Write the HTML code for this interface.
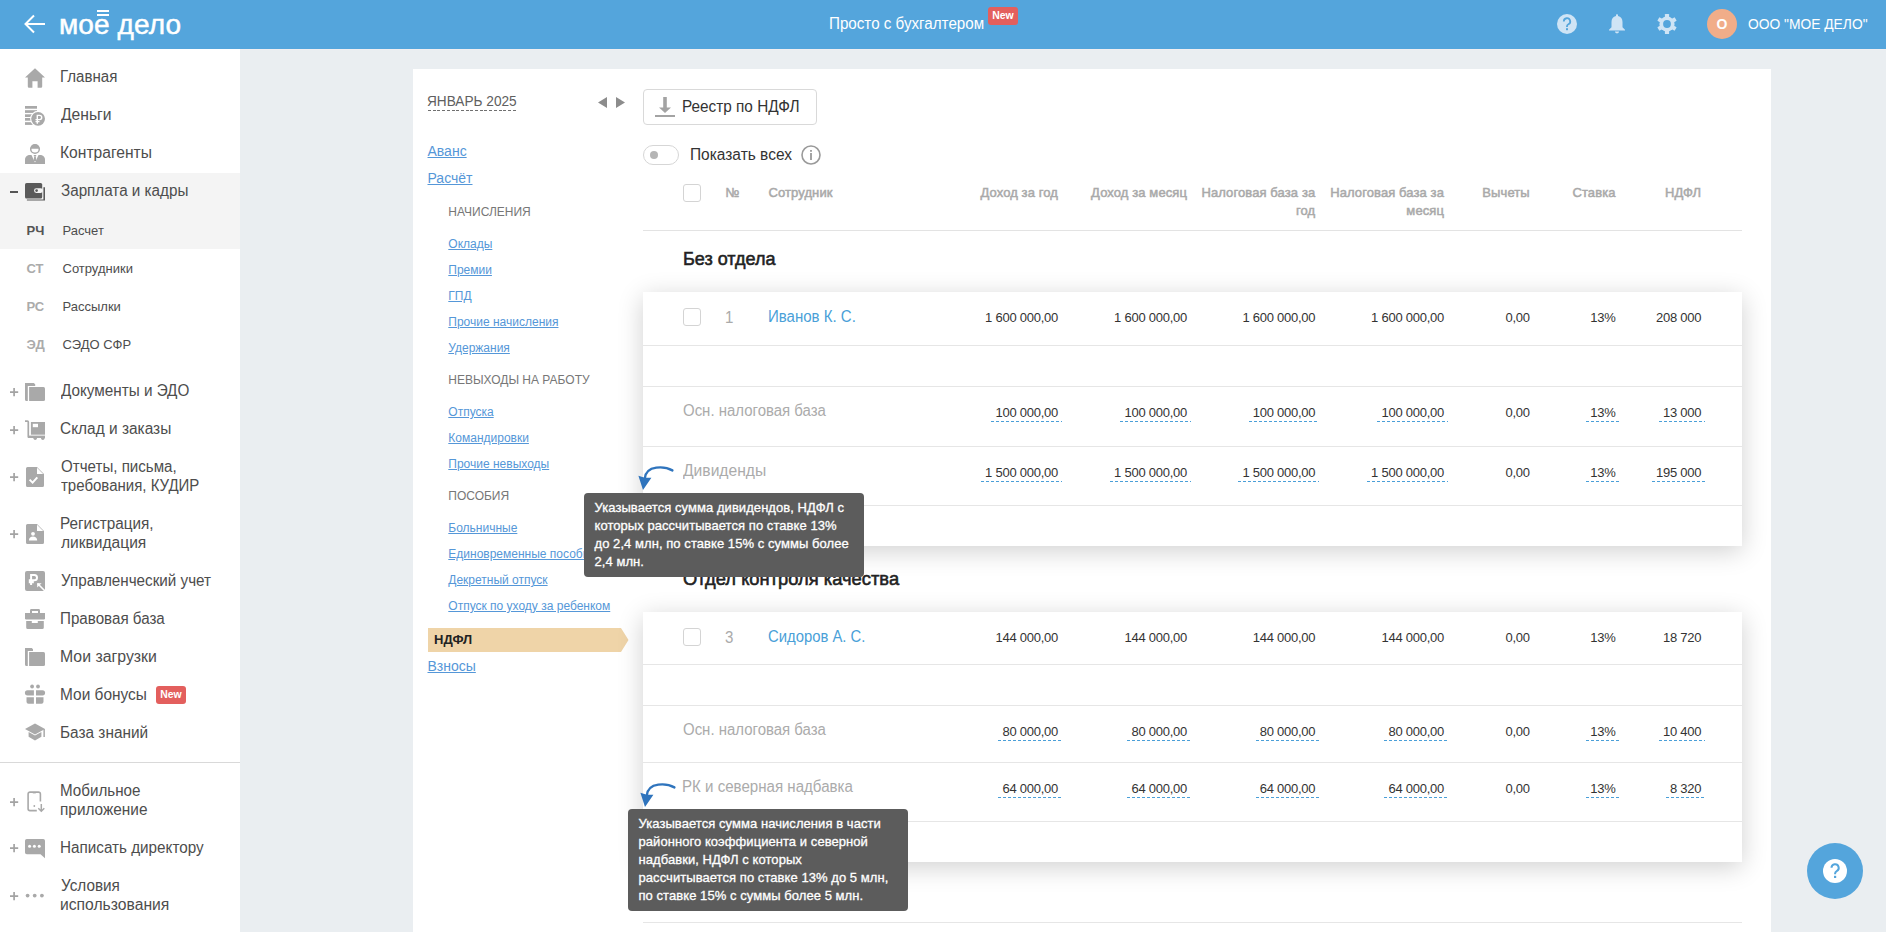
<!DOCTYPE html><html><head><meta charset="utf-8"><style>
html,body{margin:0;padding:0;}
body{width:1886px;height:932px;overflow:hidden;position:relative;background:#eaeef1;font-family:"Liberation Sans",sans-serif;}
.t{position:absolute;white-space:pre;}
svg{position:absolute;overflow:visible;}
.lnk{text-decoration:underline;text-underline-offset:1px;}
.dl{display:inline-block;height:16px;padding:0 4px;vertical-align:top;background:repeating-linear-gradient(90deg,#4a9fd8 0 3px,transparent 3px 5px) left bottom/100% 1px no-repeat;}
</style></head><body>
<div style="position:absolute;left:0px;top:0px;width:1886px;height:49px;background:#54a5dc;"></div>
<svg style="left:24px;top:14px" width="22" height="20" viewBox="0 0 22 20"><path d="M21 10H2M10 1.5L1.5 10L10 18.5" fill="none" stroke="#fff" stroke-width="2"/></svg>
<div class="t" style="left:59px;top:10.8px;font-size:28px;line-height:28px;color:#fff;letter-spacing:0.1px;-webkit-text-stroke:0.5px #fff">мое дело</div>
<div style="position:absolute;left:97px;top:10px;width:12px;height:2.2px;background:#fff;"></div>
<div style="position:absolute;left:97px;top:14px;width:12px;height:2.2px;background:#fff;"></div>
<div class="t " style="top:16px;font-size:16px;line-height:16px;color:#fff;left:828.55px;transform:scaleX(0.9481);transform-origin:0 0;">Просто с бухгалтером</div>
<div style="position:absolute;left:988px;top:7px;width:30px;height:18px;background:#e35f5d;border-radius:3px;"></div>
<div class="t " style="top:10px;font-size:11px;line-height:11px;color:#fff;font-weight:700;left:703.00px;width:600px;text-align:center;transform:scaleX(0.95);transform-origin:50% 0;">New</div>
<svg style="left:1557px;top:14px" width="20" height="20" viewBox="0 0 20 20"><circle cx="10" cy="10" r="10" fill="#cfe4f5"/><path d="M6.8 7.4a3.2 3.2 0 1 1 4.6 2.9c-1 .5-1.4 1-1.4 2v.6" fill="none" stroke="#54a5dc" stroke-width="1.8"/><rect x="9" y="14.2" width="2" height="2" fill="#54a5dc"/></svg>
<svg style="left:1609px;top:14px" width="16" height="20" viewBox="0 0 16 20"><path d="M8 0.3c.6 0 1 .4 1 1v.8c2.9.5 4.5 3 4.5 6v5.2L16 15.8v.6H0v-.6l2.5-2.5V8.1c0-3 1.6-5.5 4.5-6v-.8c0-.6.4-1 1-1z M5.9 17.6h4.2a2.1 1.8 0 0 1-4.2 0z" fill="#cfe4f5"/></svg>
<svg style="left:1657px;top:14px" width="20" height="20" viewBox="0 0 20 20"><g fill="#cfe4f5"><circle cx="10" cy="10" r="7.6"/><rect x="7.9" y="0" width="4.2" height="20" rx="0.6"/><rect x="7.9" y="0" width="4.2" height="20" rx="0.6" transform="rotate(60 10 10)"/><rect x="7.9" y="0" width="4.2" height="20" rx="0.6" transform="rotate(120 10 10)"/></g><circle cx="10" cy="10" r="3.9" fill="#54a5dc"/></svg>
<div style="position:absolute;left:1707px;top:9px;width:30px;height:30px;background:#f1ad89;border-radius:50%;"></div>
<div class="t " style="top:17px;font-size:14px;line-height:14px;color:#fff;font-weight:700;left:1422.00px;width:600px;text-align:center;">О</div>
<div class="t " style="top:16px;font-size:15px;line-height:15px;color:#fff;left:1748.20px;transform:scaleX(0.9208);transform-origin:0 0;">ООО "МОЕ ДЕЛО"</div>
<div style="position:absolute;left:0px;top:49px;width:240px;height:1886px;background:#fff;"></div>
<div style="position:absolute;left:240px;top:49px;width:1886px;height:1px;background:#f1eff1;"></div>
<div style="position:absolute;left:0px;top:173px;width:240px;height:76px;background:#f4f4f4;"></div>
<div style="position:absolute;left:0px;top:762px;width:240px;height:1px;background:#d9d9d9;"></div>
<div class="t " style="top:69px;font-size:16px;line-height:16px;color:#4d4d4d;left:59.76px;transform:scaleX(0.9424);transform-origin:0 0;">Главная</div>
<svg style="left:25px;top:68px" width="20" height="20" viewBox="0 0 20 20"><path d="M10 0.3L20 9.6H17.2V18.6a1.2 1.2 0 0 1-1.2 1.2H12.6V13.2H7.4V19.8H4a1.2 1.2 0 0 1-1.2-1.2V9.6H0z" fill="#a9a9a9"/></svg>
<div class="t " style="top:107px;font-size:16px;line-height:16px;color:#4d4d4d;left:60.70px;transform:scaleX(0.9784);transform-origin:0 0;">Деньги</div>
<svg style="left:24px;top:105px" width="22" height="21" viewBox="0 0 22 21"><rect x="1" y="1" width="12" height="2.7" fill="#a9a9a9"/><rect x="1" y="5.2" width="12" height="2.7" fill="#a9a9a9"/><rect x="1" y="9.3" width="12" height="2.7" fill="#a9a9a9"/><rect x="1" y="13" width="12" height="2.7" fill="#a9a9a9"/><rect x="1" y="17.2" width="12" height="2.7" fill="#a9a9a9"/><circle cx="14.1" cy="13.8" r="8" fill="#fff"/><circle cx="14.1" cy="13.8" r="6.9" fill="#a9a9a9"/><path d="M13.3 18.7V10.4h2.3a2.1 2.1 0 0 1 0 4.2H11.5M11.5 16.6h4" fill="none" stroke="#fff" stroke-width="1.4"/></svg>
<div class="t " style="top:145px;font-size:16px;line-height:16px;color:#4d4d4d;left:59.72px;transform:scaleX(0.9753);transform-origin:0 0;">Контрагенты</div>
<svg style="left:25px;top:143px" width="20" height="21" viewBox="0 0 20 21"><circle cx="10" cy="6" r="4.3" fill="none" stroke="#a9a9a9" stroke-width="1.5"/><path d="M5.7 5.8a4.3 4.3 0 0 1 8.6 0z" fill="#a9a9a9"/><path d="M0 21V16.5C0 13.8 2.2 12 5 12H15C17.8 12 20 13.8 20 16.5V21z" fill="#a9a9a9"/><path d="M6.5 12L10 19.5L13.5 12z" fill="#fff"/><path d="M8.8 12H11.2V13.3H8.8z M9.2 13.6H10.8L11.4 18H8.6z" fill="#a9a9a9"/></svg>
<div class="t " style="top:183px;font-size:16px;line-height:16px;color:#4d4d4d;left:60.70px;transform:scaleX(0.9511);transform-origin:0 0;">Зарплата и кадры</div>
<svg style="left:25px;top:183px" width="20" height="18" viewBox="0 0 20 18"><rect x="0" y="0" width="17.2" height="15.6" rx="1.6" fill="#5a5a5a"/><path d="M18.4 4.3H20V17.6H1.9V16.4H18.4z" fill="#5a5a5a"/><rect x="9" y="5.3" width="9" height="4.6" rx="2.3" fill="#f4f4f4"/><circle cx="11.6" cy="7.6" r="1.35" fill="#5a5a5a"/></svg>
<div class="t " style="top:383px;font-size:16px;line-height:16px;color:#4d4d4d;left:60.70px;transform:scaleX(0.9537);transform-origin:0 0;">Документы и ЭДО</div>
<svg style="left:25px;top:383px" width="20" height="18" viewBox="0 0 20 18"><path d="M0 0H8.8L10.2 1.3V2.9H2.8V18H1.5A1.5 1.5 0 0 1 0 16.5z" fill="#a9a9a9"/><path d="M4.1 4.1H18.5A1.5 1.5 0 0 1 20 5.6V16.5A1.5 1.5 0 0 1 18.5 18H4.1z" fill="#a9a9a9"/></svg>
<div class="t " style="top:421px;font-size:16px;line-height:16px;color:#4d4d4d;left:59.74px;transform:scaleX(0.9649);transform-origin:0 0;">Склад и заказы</div>
<svg style="left:25px;top:420px" width="20" height="21" viewBox="0 0 20 21"><path d="M0 1.2H2.4a0.9 0.9 0 0 1 0.9 0.9V16.6H20" fill="none" stroke="#a9a9a9" stroke-width="1.7"/><rect x="5.9" y="2" width="14.1" height="12.7" fill="#a9a9a9"/><rect x="7.8" y="3.8" width="5.2" height="3.4" fill="#fff"/><rect x="3" y="15.8" width="17" height="2.2" fill="#a9a9a9"/><circle cx="10.2" cy="18.3" r="1.7" fill="#a9a9a9"/><circle cx="17.8" cy="18.3" r="1.7" fill="#a9a9a9"/></svg>
<div class="t " style="top:459px;font-size:16px;line-height:16px;color:#4d4d4d;left:60.70px;transform:scaleX(0.9446);transform-origin:0 0;">Отчеты, письма,</div>
<div class="t " style="top:478px;font-size:16px;line-height:16px;color:#4d4d4d;left:60.70px;transform:scaleX(0.9381);transform-origin:0 0;">требования, КУДИР</div>
<svg style="left:26px;top:467px" width="18" height="20" viewBox="0 0 18 20"><path d="M1.5 0H11L18 7V18.5a1.5 1.5 0 0 1-1.5 1.5H1.5A1.5 1.5 0 0 1 0 18.5V1.5A1.5 1.5 0 0 1 1.5 0z" fill="#a9a9a9"/><path d="M11 0.8V7H17.2z" fill="#fff"/><path d="M3.6 12.6L6.6 15.6L11.3 10.4" fill="none" stroke="#fff" stroke-width="2"/></svg>
<div class="t " style="top:516px;font-size:16px;line-height:16px;color:#4d4d4d;left:59.74px;transform:scaleX(0.9552);transform-origin:0 0;">Регистрация,</div>
<div class="t " style="top:535px;font-size:16px;line-height:16px;color:#4d4d4d;left:60.70px;transform:scaleX(0.9724);transform-origin:0 0;">ликвидация</div>
<svg style="left:26px;top:524px" width="18" height="20" viewBox="0 0 18 20"><path d="M1.5 0H11L18 7V18.5a1.5 1.5 0 0 1-1.5 1.5H1.5A1.5 1.5 0 0 1 0 18.5V1.5A1.5 1.5 0 0 1 1.5 0z" fill="#a9a9a9"/><path d="M11 0.8V7H17.2z" fill="#fff"/><circle cx="7" cy="9.8" r="1.9" fill="#fff"/><path d="M2.9 16.6C2.9 13.8 4.8 12.6 7 12.6S11.2 13.8 11.2 16.6z" fill="#fff"/></svg>
<div class="t " style="top:573px;font-size:16px;line-height:16px;color:#4d4d4d;left:60.70px;transform:scaleX(0.9513);transform-origin:0 0;">Управленческий учет</div>
<svg style="left:25px;top:571px" width="20" height="20" viewBox="0 0 20 20"><path d="M2 0H18a2 2 0 0 1 2 2V18.5L18.5 20H2a2 2 0 0 1-2-2V2a2 2 0 0 1 2-2z" fill="#a9a9a9"/><path d="M6.1 14V4.1H9.4a2.6 2.6 0 0 1 0 5.2H3.8M3.8 11.3H8.8" fill="none" stroke="#fff" stroke-width="2"/><path d="M12.5 12.5L20 20" fill="none" stroke="#fff" stroke-width="1.6"/><path d="M12.2 12.2H16.6L12.2 16.6z" fill="#fff"/></svg>
<div class="t " style="top:611px;font-size:16px;line-height:16px;color:#4d4d4d;left:59.75px;transform:scaleX(0.9473);transform-origin:0 0;">Правовая база</div>
<svg style="left:25px;top:609px" width="20" height="20" viewBox="0 0 20 20"><path d="M5 1.4A1.4 1.4 0 0 1 6.4 0H13.6A1.4 1.4 0 0 1 15 1.4V4H13V2H7V4H5z" fill="#a9a9a9"/><path d="M0 4H20V9.2A1.2 1.2 0 0 1 18.8 10.4H1.2A1.2 1.2 0 0 1 0 9.2z" fill="#a9a9a9"/><path d="M1.2 12H6.8V13.9H12.8V12H18.8V18.5A1.5 1.5 0 0 1 17.3 20H2.7A1.5 1.5 0 0 1 1.2 18.5z" fill="#a9a9a9"/></svg>
<div class="t " style="top:649px;font-size:16px;line-height:16px;color:#4d4d4d;left:59.71px;transform:scaleX(0.9896);transform-origin:0 0;">Мои загрузки</div>
<svg style="left:25px;top:648px" width="20" height="18" viewBox="0 0 20 18"><path d="M0 0H6.8L8 1.2V2.9H2.8V18H1.5A1.5 1.5 0 0 1 0 16.5z" fill="#a9a9a9"/><path d="M4.1 4.1H18.5A1.5 1.5 0 0 1 20 5.6V16.5A1.5 1.5 0 0 1 18.5 18H4.1z" fill="#a9a9a9"/></svg>
<div class="t " style="top:687px;font-size:16px;line-height:16px;color:#4d4d4d;left:59.73px;transform:scaleX(0.9659);transform-origin:0 0;">Мои бонусы</div>
<svg style="left:25px;top:684px" width="20" height="20" viewBox="0 0 20 20"><circle cx="7.1" cy="2.5" r="1.9" fill="#a9a9a9"/><circle cx="13" cy="2.5" r="1.9" fill="#a9a9a9"/><path d="M2.5 6.2H8.9V11.4H2.5a2.6 2.6 0 0 1 0-5.2z M11 6.2H17.5a2.6 2.6 0 0 1 0 5.2H11z" fill="#a9a9a9"/><path d="M1.5 13.2H8.9V19.8H3.5a2 2 0 0 1-2-2z M11 13.2H18.5V17.8a2 2 0 0 1-2 2H11z" fill="#a9a9a9"/></svg>
<div class="t " style="top:725px;font-size:16px;line-height:16px;color:#4d4d4d;left:59.74px;transform:scaleX(0.9611);transform-origin:0 0;">База знаний</div>
<svg style="left:25px;top:723px" width="20" height="18" viewBox="0 0 20 18"><path d="M10 0.5L20 6L10 11.6L0 6z" fill="#a9a9a9"/><path d="M3.6 9V13.8L10 17.5L16.4 13.8V9L10 12.6z" fill="#a9a9a9"/><rect x="18.4" y="6" width="1.5" height="8" fill="#a9a9a9"/></svg>
<div class="t " style="top:783px;font-size:16px;line-height:16px;color:#4d4d4d;left:59.75px;transform:scaleX(0.9488);transform-origin:0 0;">Мобильное</div>
<div class="t " style="top:802px;font-size:16px;line-height:16px;color:#4d4d4d;left:59.74px;transform:scaleX(0.9611);transform-origin:0 0;">приложение</div>
<svg style="left:27px;top:791px" width="19" height="22" viewBox="0 0 19 22"><path d="M9.8 19.6H3A1.9 1.9 0 0 1 1.1 17.7V3A1.9 1.9 0 0 1 3 1.1H11.5A1.9 1.9 0 0 1 13.4 3V10.5" fill="none" stroke="#a9a9a9" stroke-width="1.6"/><rect x="5.8" y="1" width="3" height="1.4" fill="#a9a9a9"/><circle cx="7.3" cy="15" r="0.9" fill="#a9a9a9"/><path d="M14.3 13V20.2M11.3 17.2L14.3 20.2L17.3 17.2" fill="none" stroke="#a9a9a9" stroke-width="1.5"/></svg>
<div class="t " style="top:840px;font-size:16px;line-height:16px;color:#4d4d4d;left:59.75px;transform:scaleX(0.9527);transform-origin:0 0;">Написать директору</div>
<svg style="left:25px;top:839px" width="20" height="20" viewBox="0 0 20 20"><path d="M1.8 0H18.2A1.8 1.8 0 0 1 20 1.8V19.2L15.5 15.3H1.8A1.8 1.8 0 0 1 0 13.5V1.8A1.8 1.8 0 0 1 1.8 0z" fill="#a9a9a9"/><circle cx="4.6" cy="7.2" r="1.5" fill="#fff"/><circle cx="9.4" cy="7.2" r="1.5" fill="#fff"/><circle cx="14.2" cy="7.2" r="1.5" fill="#fff"/></svg>
<div class="t " style="top:878px;font-size:16px;line-height:16px;color:#4d4d4d;left:60.70px;transform:scaleX(0.9557);transform-origin:0 0;">Условия</div>
<div class="t " style="top:897px;font-size:16px;line-height:16px;color:#4d4d4d;left:59.72px;transform:scaleX(0.9800);transform-origin:0 0;">использования</div>
<svg style="left:25px;top:893px" width="20" height="5" viewBox="0 0 20 5"><circle cx="2.6" cy="2.6" r="1.9" fill="#a9a9a9"/><circle cx="9.7" cy="2.6" r="1.9" fill="#a9a9a9"/><circle cx="16.9" cy="2.6" r="1.9" fill="#a9a9a9"/></svg>
<svg style="left:9.9px;top:387.8px" width="8.2" height="8.2" viewBox="0 0 8.2 8.2"><path d="M0 4.1h8.2M4.1 0v8.2" stroke="#a3a3a3" stroke-width="1.7"/></svg>
<svg style="left:9.9px;top:425.8px" width="8.2" height="8.2" viewBox="0 0 8.2 8.2"><path d="M0 4.1h8.2M4.1 0v8.2" stroke="#a3a3a3" stroke-width="1.7"/></svg>
<svg style="left:9.9px;top:472.9px" width="8.2" height="8.2" viewBox="0 0 8.2 8.2"><path d="M0 4.1h8.2M4.1 0v8.2" stroke="#a3a3a3" stroke-width="1.7"/></svg>
<svg style="left:9.9px;top:529.9px" width="8.2" height="8.2" viewBox="0 0 8.2 8.2"><path d="M0 4.1h8.2M4.1 0v8.2" stroke="#a3a3a3" stroke-width="1.7"/></svg>
<svg style="left:9.9px;top:797.6px" width="8.2" height="8.2" viewBox="0 0 8.2 8.2"><path d="M0 4.1h8.2M4.1 0v8.2" stroke="#a3a3a3" stroke-width="1.7"/></svg>
<svg style="left:9.9px;top:844.3px" width="8.2" height="8.2" viewBox="0 0 8.2 8.2"><path d="M0 4.1h8.2M4.1 0v8.2" stroke="#a3a3a3" stroke-width="1.7"/></svg>
<svg style="left:9.9px;top:891.6px" width="8.2" height="8.2" viewBox="0 0 8.2 8.2"><path d="M0 4.1h8.2M4.1 0v8.2" stroke="#a3a3a3" stroke-width="1.7"/></svg>
<div style="position:absolute;left:9.9px;top:191px;width:8.2px;height:2px;background:#555;"></div>
<div class="t " style="top:224px;font-size:13px;line-height:13px;color:#555;font-weight:700;left:26.50px;">РЧ</div>
<div class="t " style="top:224px;font-size:13px;line-height:13px;color:#4d4d4d;left:62.50px;">Расчет</div>
<div class="t " style="top:262px;font-size:13px;line-height:13px;color:#ababab;font-weight:700;left:26.50px;">СТ</div>
<div class="t " style="top:262px;font-size:13px;line-height:13px;color:#4d4d4d;left:62.50px;">Сотрудники</div>
<div class="t " style="top:300px;font-size:13px;line-height:13px;color:#ababab;font-weight:700;left:26.50px;">РС</div>
<div class="t " style="top:300px;font-size:13px;line-height:13px;color:#4d4d4d;left:62.50px;">Рассылки</div>
<div class="t " style="top:338px;font-size:13px;line-height:13px;color:#ababab;font-weight:700;left:26.50px;">ЭД</div>
<div class="t " style="top:338px;font-size:13px;line-height:13px;color:#4d4d4d;left:62.50px;">СЭДО СФР</div>
<div style="position:absolute;left:156px;top:686px;width:30px;height:18px;background:#e35f5d;border-radius:3px;"></div>
<div class="t " style="top:689px;font-size:11px;line-height:11px;color:#fff;font-weight:700;left:-129.00px;width:600px;text-align:center;transform:scaleX(0.95);transform-origin:50% 0;">New</div>
<div style="position:absolute;left:413px;top:69px;width:1358px;height:900px;background:#fff;"></div>
<div class="t " style="top:94px;font-size:14px;line-height:14px;color:#606060;left:426.93px;transform:scaleX(0.9747);transform-origin:0 0;">ЯНВАРЬ 2025</div>
<div style="position:absolute;left:428px;top:110px;width:89px;height:1px;background:repeating-linear-gradient(90deg,#707070 0 3px,transparent 3px 4.7px);"></div>
<svg style="left:598px;top:97px" width="28" height="11" viewBox="0 0 28 11"><path d="M9 0v11L0 5.5z M18 0v11l9-5.5z" fill="#8c8c8c"/></svg>
<div class="t lnk" style="top:144px;font-size:14px;line-height:14px;color:#5597d8;left:427.50px;">Аванс</div>
<div class="t lnk" style="top:171px;font-size:14px;line-height:14px;color:#5597d8;left:427.50px;">Расчёт</div>
<div class="t " style="top:206px;font-size:12px;line-height:12px;color:#777;left:448.30px;">НАЧИСЛЕНИЯ</div>
<div class="t lnk" style="top:238px;font-size:12px;line-height:12px;color:#5597d8;left:448.30px;">Оклады</div>
<div class="t lnk" style="top:264px;font-size:12px;line-height:12px;color:#5597d8;left:448.30px;">Премии</div>
<div class="t lnk" style="top:290px;font-size:12px;line-height:12px;color:#5597d8;left:448.30px;">ГПД</div>
<div class="t lnk" style="top:316px;font-size:12px;line-height:12px;color:#5597d8;left:448.30px;">Прочие начисления</div>
<div class="t lnk" style="top:342px;font-size:12px;line-height:12px;color:#5597d8;left:448.30px;">Удержания</div>
<div class="t " style="top:374px;font-size:12px;line-height:12px;color:#777;left:448.30px;">НЕВЫХОДЫ НА РАБОТУ</div>
<div class="t lnk" style="top:406px;font-size:12px;line-height:12px;color:#5597d8;left:448.30px;">Отпуска</div>
<div class="t lnk" style="top:432px;font-size:12px;line-height:12px;color:#5597d8;left:448.30px;">Командировки</div>
<div class="t lnk" style="top:458px;font-size:12px;line-height:12px;color:#5597d8;left:448.30px;">Прочие невыходы</div>
<div class="t " style="top:490px;font-size:12px;line-height:12px;color:#777;left:448.30px;">ПОСОБИЯ</div>
<div class="t lnk" style="top:522px;font-size:12px;line-height:12px;color:#5597d8;left:448.30px;">Больничные</div>
<div class="t lnk" style="top:548px;font-size:12px;line-height:12px;color:#5597d8;left:448.30px;">Единовременные пособия</div>
<div class="t lnk" style="top:574px;font-size:12px;line-height:12px;color:#5597d8;left:448.30px;">Декретный отпуск</div>
<div class="t lnk" style="top:600px;font-size:12px;line-height:12px;color:#5597d8;left:448.30px;">Отпуск по уходу за ребенком</div>
<svg style="left:428px;top:628px" width="201" height="24" viewBox="0 0 201 24"><path d="M0 0H193L200.5 12L193 24H0z" fill="#efd4a8"/></svg>
<div class="t " style="top:633px;font-size:13px;line-height:13px;color:#222;font-weight:700;left:434.00px;">НДФЛ</div>
<div class="t lnk" style="top:659px;font-size:14px;line-height:14px;color:#5597d8;left:427.50px;">Взносы</div>
<div style="position:absolute;left:643px;top:89px;width:172px;height:34px;border:1px solid #d9d9d9;border-radius:4px;background:#fff;"></div>
<svg style="left:655px;top:97px" width="20" height="20" viewBox="0 0 20 20"><rect x="8.2" y="0" width="3.6" height="11" fill="#a3a3a3"/><path d="M4 10.4H16L10 16z" fill="#a3a3a3"/><rect x="0" y="18" width="20" height="2" fill="#a3a3a3"/></svg>
<div class="t " style="top:99px;font-size:16px;line-height:16px;color:#333;left:682.14px;transform:scaleX(0.9579);transform-origin:0 0;">Реестр по НДФЛ</div>
<div style="position:absolute;left:643px;top:145px;width:34px;height:18px;border:1px solid #d6d6d6;border-radius:10px;"></div>
<div style="position:absolute;left:650px;top:151px;width:8px;height:8px;background:#b5b5b5;border-radius:50%;"></div>
<div class="t " style="top:147px;font-size:16px;line-height:16px;color:#333;left:690.33px;transform:scaleX(0.9673);transform-origin:0 0;">Показать всех</div>
<svg style="left:801px;top:145px" width="20" height="20" viewBox="0 0 20 20"><circle cx="10" cy="10" r="9" fill="none" stroke="#9a9a9a" stroke-width="1.6"/><rect x="9.1" y="8" width="1.8" height="7" fill="#9a9a9a"/><rect x="9.1" y="5" width="1.8" height="1.8" fill="#9a9a9a"/></svg>
<div style="position:absolute;left:683px;top:184px;width:16px;height:16px;border:1px solid #d4d4d4;border-radius:3px;background:#fff;"></div>
<div class="t " style="top:186px;font-size:13px;line-height:13px;color:#a9a9a9;left:725.50px;-webkit-text-stroke:0.5px #a9a9a9;">№</div>
<div class="t " style="top:186px;font-size:13px;line-height:13px;color:#a9a9a9;letter-spacing:0.1px;left:768.50px;-webkit-text-stroke:0.5px #a9a9a9;">Сотрудник</div>
<div class="t " style="top:186px;font-size:13px;line-height:13px;color:#a9a9a9;letter-spacing:0.1px;left:458.00px;width:600px;text-align:right;-webkit-text-stroke:0.5px #a9a9a9;">Доход за год</div>
<div class="t " style="top:186px;font-size:13px;line-height:13px;color:#a9a9a9;letter-spacing:0.1px;left:587.00px;width:600px;text-align:right;-webkit-text-stroke:0.5px #a9a9a9;">Доход за месяц</div>
<div class="t " style="top:186px;font-size:13px;line-height:13px;color:#a9a9a9;letter-spacing:0.1px;left:715.30px;width:600px;text-align:right;-webkit-text-stroke:0.5px #a9a9a9;">Налоговая база за</div>
<div class="t " style="top:204px;font-size:13px;line-height:13px;color:#a9a9a9;letter-spacing:0.1px;left:715.30px;width:600px;text-align:right;-webkit-text-stroke:0.5px #a9a9a9;">год</div>
<div class="t " style="top:186px;font-size:13px;line-height:13px;color:#a9a9a9;letter-spacing:0.1px;left:844.00px;width:600px;text-align:right;-webkit-text-stroke:0.5px #a9a9a9;">Налоговая база за</div>
<div class="t " style="top:204px;font-size:13px;line-height:13px;color:#a9a9a9;letter-spacing:0.1px;left:844.00px;width:600px;text-align:right;-webkit-text-stroke:0.5px #a9a9a9;">месяц</div>
<div class="t " style="top:186px;font-size:13px;line-height:13px;color:#a9a9a9;letter-spacing:0.1px;left:929.80px;width:600px;text-align:right;-webkit-text-stroke:0.5px #a9a9a9;">Вычеты</div>
<div class="t " style="top:186px;font-size:13px;line-height:13px;color:#a9a9a9;letter-spacing:0.1px;left:1015.60px;width:600px;text-align:right;-webkit-text-stroke:0.5px #a9a9a9;">Ставка</div>
<div class="t " style="top:186px;font-size:13px;line-height:13px;color:#a9a9a9;letter-spacing:0.1px;left:1101.20px;width:600px;text-align:right;-webkit-text-stroke:0.5px #a9a9a9;">НДФЛ</div>
<div style="position:absolute;left:643px;top:230px;width:1099px;height:1px;background:#e3e3e3;"></div>
<div class="t " style="top:250px;font-size:18px;line-height:18px;color:#222;left:682.50px;transform:scaleX(1.0011);transform-origin:0 0;-webkit-text-stroke:0.55px #222;">Без отдела</div>
<div style="position:absolute;left:643px;top:292px;width:1099px;height:254px;background:#fff;box-shadow:0 5px 24px rgba(0,0,0,0.19);"></div>
<div style="position:absolute;left:643px;top:345px;width:1099px;height:1px;background:#e6e6e6;"></div>
<div style="position:absolute;left:643px;top:386px;width:1099px;height:1px;background:#e6e6e6;"></div>
<div style="position:absolute;left:643px;top:446px;width:1099px;height:1px;background:#e6e6e6;"></div>
<div style="position:absolute;left:643px;top:505px;width:1099px;height:1px;background:#e6e6e6;"></div>
<div style="position:absolute;left:643px;top:612px;width:1099px;height:250px;background:#fff;box-shadow:0 5px 24px rgba(0,0,0,0.19);"></div>
<div style="position:absolute;left:643px;top:664px;width:1099px;height:1px;background:#e6e6e6;"></div>
<div style="position:absolute;left:643px;top:705px;width:1099px;height:1px;background:#e6e6e6;"></div>
<div style="position:absolute;left:643px;top:762px;width:1099px;height:1px;background:#e6e6e6;"></div>
<div style="position:absolute;left:643px;top:821px;width:1099px;height:1px;background:#e6e6e6;"></div>
<div style="position:absolute;left:643px;top:922px;width:1099px;height:1px;background:#e6e6e6;"></div>
<div class="t " style="top:570px;font-size:18px;line-height:18px;color:#222;left:683.00px;transform:scaleX(1.0188);transform-origin:0 0;-webkit-text-stroke:0.55px #222;">Отдел контроля качества</div>
<div style="position:absolute;left:683px;top:308px;width:16px;height:16px;border:1px solid #d4d4d4;border-radius:3px;background:#fff;"></div>
<div class="t " style="top:310px;font-size:16px;line-height:16px;color:#aaa;left:725.00px;transform:scaleX(0.94);transform-origin:0 0;">1</div>
<div class="t " style="top:309px;font-size:16px;line-height:16px;color:#4a9fd8;left:768.16px;transform:scaleX(0.9380);transform-origin:0 0;">Иванов К. С.</div>
<div class="t " style="top:311px;font-size:13px;line-height:13px;color:#333;letter-spacing:-0.25px;left:458.00px;width:600px;text-align:right;">1 600 000,00</div>
<div class="t " style="top:311px;font-size:13px;line-height:13px;color:#333;letter-spacing:-0.25px;left:587.00px;width:600px;text-align:right;">1 600 000,00</div>
<div class="t " style="top:311px;font-size:13px;line-height:13px;color:#333;letter-spacing:-0.25px;left:715.30px;width:600px;text-align:right;">1 600 000,00</div>
<div class="t " style="top:311px;font-size:13px;line-height:13px;color:#333;letter-spacing:-0.25px;left:844.00px;width:600px;text-align:right;">1 600 000,00</div>
<div class="t " style="top:311px;font-size:13px;line-height:13px;color:#333;letter-spacing:-0.25px;left:929.80px;width:600px;text-align:right;">0,00</div>
<div class="t " style="top:311px;font-size:13px;line-height:13px;color:#333;letter-spacing:-0.25px;left:1015.60px;width:600px;text-align:right;">13%</div>
<div class="t " style="top:311px;font-size:13px;line-height:13px;color:#333;letter-spacing:-0.25px;left:1101.20px;width:600px;text-align:right;">208 000</div>
<div class="t " style="top:403px;font-size:16px;line-height:16px;color:#ababab;left:682.90px;transform:scaleX(0.9353);transform-origin:0 0;">Осн. налоговая база</div>
<div class="t " style="top:406px;font-size:13px;line-height:13px;color:#333;letter-spacing:-0.25px;left:462.00px;width:600px;text-align:right;"><span class="dl">100 000,00</span></div>
<div class="t " style="top:406px;font-size:13px;line-height:13px;color:#333;letter-spacing:-0.25px;left:591.00px;width:600px;text-align:right;"><span class="dl">100 000,00</span></div>
<div class="t " style="top:406px;font-size:13px;line-height:13px;color:#333;letter-spacing:-0.25px;left:719.30px;width:600px;text-align:right;"><span class="dl">100 000,00</span></div>
<div class="t " style="top:406px;font-size:13px;line-height:13px;color:#333;letter-spacing:-0.25px;left:848.00px;width:600px;text-align:right;"><span class="dl">100 000,00</span></div>
<div class="t " style="top:406px;font-size:13px;line-height:13px;color:#333;letter-spacing:-0.25px;left:929.80px;width:600px;text-align:right;">0,00</div>
<div class="t " style="top:406px;font-size:13px;line-height:13px;color:#333;letter-spacing:-0.25px;left:1019.60px;width:600px;text-align:right;"><span class="dl">13%</span></div>
<div class="t " style="top:406px;font-size:13px;line-height:13px;color:#333;letter-spacing:-0.25px;left:1105.20px;width:600px;text-align:right;"><span class="dl">13 000</span></div>
<div class="t " style="top:463px;font-size:16px;line-height:16px;color:#ababab;left:683.10px;transform:scaleX(0.9774);transform-origin:0 0;">Дивиденды</div>
<div class="t " style="top:466px;font-size:13px;line-height:13px;color:#333;letter-spacing:-0.25px;left:462.00px;width:600px;text-align:right;"><span class="dl">1 500 000,00</span></div>
<div class="t " style="top:466px;font-size:13px;line-height:13px;color:#333;letter-spacing:-0.25px;left:591.00px;width:600px;text-align:right;"><span class="dl">1 500 000,00</span></div>
<div class="t " style="top:466px;font-size:13px;line-height:13px;color:#333;letter-spacing:-0.25px;left:719.30px;width:600px;text-align:right;"><span class="dl">1 500 000,00</span></div>
<div class="t " style="top:466px;font-size:13px;line-height:13px;color:#333;letter-spacing:-0.25px;left:848.00px;width:600px;text-align:right;"><span class="dl">1 500 000,00</span></div>
<div class="t " style="top:466px;font-size:13px;line-height:13px;color:#333;letter-spacing:-0.25px;left:929.80px;width:600px;text-align:right;">0,00</div>
<div class="t " style="top:466px;font-size:13px;line-height:13px;color:#333;letter-spacing:-0.25px;left:1019.60px;width:600px;text-align:right;"><span class="dl">13%</span></div>
<div class="t " style="top:466px;font-size:13px;line-height:13px;color:#333;letter-spacing:-0.25px;left:1105.20px;width:600px;text-align:right;"><span class="dl">195 000</span></div>
<div style="position:absolute;left:683px;top:628px;width:16px;height:16px;border:1px solid #d4d4d4;border-radius:3px;background:#fff;"></div>
<div class="t " style="top:630px;font-size:16px;line-height:16px;color:#aaa;left:725.00px;transform:scaleX(0.94);transform-origin:0 0;">3</div>
<div class="t " style="top:629px;font-size:16px;line-height:16px;color:#4a9fd8;left:767.87px;transform:scaleX(0.9272);transform-origin:0 0;">Сидоров А. С.</div>
<div class="t " style="top:631px;font-size:13px;line-height:13px;color:#333;letter-spacing:-0.25px;left:458.00px;width:600px;text-align:right;">144 000,00</div>
<div class="t " style="top:631px;font-size:13px;line-height:13px;color:#333;letter-spacing:-0.25px;left:587.00px;width:600px;text-align:right;">144 000,00</div>
<div class="t " style="top:631px;font-size:13px;line-height:13px;color:#333;letter-spacing:-0.25px;left:715.30px;width:600px;text-align:right;">144 000,00</div>
<div class="t " style="top:631px;font-size:13px;line-height:13px;color:#333;letter-spacing:-0.25px;left:844.00px;width:600px;text-align:right;">144 000,00</div>
<div class="t " style="top:631px;font-size:13px;line-height:13px;color:#333;letter-spacing:-0.25px;left:929.80px;width:600px;text-align:right;">0,00</div>
<div class="t " style="top:631px;font-size:13px;line-height:13px;color:#333;letter-spacing:-0.25px;left:1015.60px;width:600px;text-align:right;">13%</div>
<div class="t " style="top:631px;font-size:13px;line-height:13px;color:#333;letter-spacing:-0.25px;left:1101.20px;width:600px;text-align:right;">18 720</div>
<div class="t " style="top:722px;font-size:16px;line-height:16px;color:#ababab;left:682.90px;transform:scaleX(0.9353);transform-origin:0 0;">Осн. налоговая база</div>
<div class="t " style="top:725px;font-size:13px;line-height:13px;color:#333;letter-spacing:-0.25px;left:462.00px;width:600px;text-align:right;"><span class="dl">80 000,00</span></div>
<div class="t " style="top:725px;font-size:13px;line-height:13px;color:#333;letter-spacing:-0.25px;left:591.00px;width:600px;text-align:right;"><span class="dl">80 000,00</span></div>
<div class="t " style="top:725px;font-size:13px;line-height:13px;color:#333;letter-spacing:-0.25px;left:719.30px;width:600px;text-align:right;"><span class="dl">80 000,00</span></div>
<div class="t " style="top:725px;font-size:13px;line-height:13px;color:#333;letter-spacing:-0.25px;left:848.00px;width:600px;text-align:right;"><span class="dl">80 000,00</span></div>
<div class="t " style="top:725px;font-size:13px;line-height:13px;color:#333;letter-spacing:-0.25px;left:929.80px;width:600px;text-align:right;">0,00</div>
<div class="t " style="top:725px;font-size:13px;line-height:13px;color:#333;letter-spacing:-0.25px;left:1019.60px;width:600px;text-align:right;"><span class="dl">13%</span></div>
<div class="t " style="top:725px;font-size:13px;line-height:13px;color:#333;letter-spacing:-0.25px;left:1105.20px;width:600px;text-align:right;"><span class="dl">10 400</span></div>
<div class="t " style="top:779px;font-size:16px;line-height:16px;color:#ababab;left:681.96px;transform:scaleX(0.9431);transform-origin:0 0;">РК и северная надбавка</div>
<div class="t " style="top:782px;font-size:13px;line-height:13px;color:#333;letter-spacing:-0.25px;left:462.00px;width:600px;text-align:right;"><span class="dl">64 000,00</span></div>
<div class="t " style="top:782px;font-size:13px;line-height:13px;color:#333;letter-spacing:-0.25px;left:591.00px;width:600px;text-align:right;"><span class="dl">64 000,00</span></div>
<div class="t " style="top:782px;font-size:13px;line-height:13px;color:#333;letter-spacing:-0.25px;left:719.30px;width:600px;text-align:right;"><span class="dl">64 000,00</span></div>
<div class="t " style="top:782px;font-size:13px;line-height:13px;color:#333;letter-spacing:-0.25px;left:848.00px;width:600px;text-align:right;"><span class="dl">64 000,00</span></div>
<div class="t " style="top:782px;font-size:13px;line-height:13px;color:#333;letter-spacing:-0.25px;left:929.80px;width:600px;text-align:right;">0,00</div>
<div class="t " style="top:782px;font-size:13px;line-height:13px;color:#333;letter-spacing:-0.25px;left:1019.60px;width:600px;text-align:right;"><span class="dl">13%</span></div>
<div class="t " style="top:782px;font-size:13px;line-height:13px;color:#333;letter-spacing:-0.25px;left:1105.20px;width:600px;text-align:right;"><span class="dl">8 320</span></div>
<div style="position:absolute;left:584px;top:493px;width:280px;height:84px;background:#5c5c5c;border-radius:4px;"></div>
<div class="t " style="top:501px;font-size:13px;line-height:13px;color:#fff;letter-spacing:0.06px;left:594.50px;-webkit-text-stroke:0.3px #fff;">Указывается сумма дивидендов, НДФЛ с</div>
<div class="t " style="top:519px;font-size:13px;line-height:13px;color:#fff;letter-spacing:0.06px;left:594.50px;-webkit-text-stroke:0.3px #fff;">которых рассчитывается по ставке 13%</div>
<div class="t " style="top:537px;font-size:13px;line-height:13px;color:#fff;letter-spacing:0.06px;left:594.50px;-webkit-text-stroke:0.3px #fff;">до 2,4 млн, по ставке 15% с суммы более</div>
<div class="t " style="top:555px;font-size:13px;line-height:13px;color:#fff;letter-spacing:0.06px;left:594.50px;-webkit-text-stroke:0.3px #fff;">2,4 млн.</div>
<div style="position:absolute;left:628px;top:809px;width:280px;height:102px;background:#5c5c5c;border-radius:4px;"></div>
<div class="t " style="top:817px;font-size:13px;line-height:13px;color:#fff;letter-spacing:0.06px;left:638.50px;-webkit-text-stroke:0.3px #fff;">Указывается сумма начисления в части</div>
<div class="t " style="top:835px;font-size:13px;line-height:13px;color:#fff;letter-spacing:0.06px;left:638.50px;-webkit-text-stroke:0.3px #fff;">районного коэффициента и северной</div>
<div class="t " style="top:853px;font-size:13px;line-height:13px;color:#fff;letter-spacing:0.06px;left:638.50px;-webkit-text-stroke:0.3px #fff;">надбавки, НДФЛ с которых</div>
<div class="t " style="top:871px;font-size:13px;line-height:13px;color:#fff;letter-spacing:0.06px;left:638.50px;-webkit-text-stroke:0.3px #fff;">рассчитывается по ставке 13% до 5 млн,</div>
<div class="t " style="top:889px;font-size:13px;line-height:13px;color:#fff;letter-spacing:0.06px;left:638.50px;-webkit-text-stroke:0.3px #fff;">по ставке 15% с суммы более 5 млн.</div>
<svg style="left:633.3px;top:459.7px" width="45" height="35" viewBox="-10 -30 45 35"><path d="M29.4 -19.6C22 -23.8 3 -25.5 1.8 -11.5" fill="none" stroke="#2f74bd" stroke-width="2.4" stroke-linecap="round"/><path d="M-4.6 -14.3L1.8 -12.2L8.4 -12.2L0 0z" fill="#2f74bd"/></svg>
<svg style="left:635.4px;top:777.4px" width="45" height="35" viewBox="-10 -30 45 35"><path d="M29.4 -19.6C22 -23.8 3 -25.5 1.8 -11.5" fill="none" stroke="#2f74bd" stroke-width="2.4" stroke-linecap="round"/><path d="M-4.6 -14.3L1.8 -12.2L8.4 -12.2L0 0z" fill="#2f74bd"/></svg>
<svg style="left:1807px;top:843px" width="56" height="56" viewBox="0 0 56 56"><circle cx="28" cy="28" r="28" fill="#54a5dc"/><circle cx="28" cy="28" r="12" fill="#fff"/><path d="M24.5 24.8a3.6 3.6 0 1 1 5.2 3.3c-1.1.6-1.6 1.2-1.6 2.3v.9" fill="none" stroke="#54a5dc" stroke-width="2"/><rect x="27" y="32.8" width="2.2" height="2.2" fill="#54a5dc"/></svg>
</body></html>
